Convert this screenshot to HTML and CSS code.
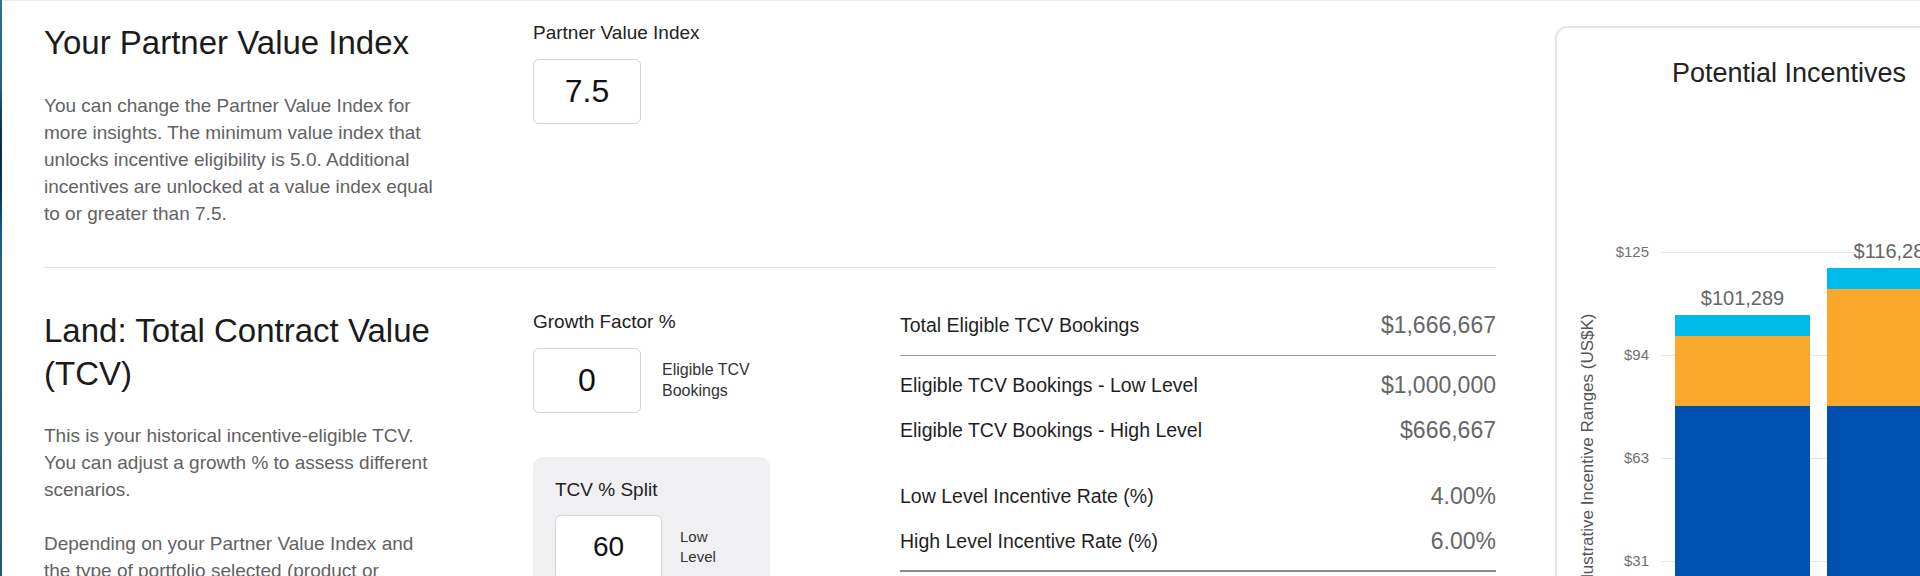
FILE: index.html
```html
<!DOCTYPE html>
<html lang="en">
<head>
<meta charset="utf-8">
<title>Partner Value Index</title>
<link rel="stylesheet" href="styles.css">
</head>
<body>
<div class="page">
  <div class="edge"></div>
  <div class="content">
    <main class="main">
      <section class="sec sec-pvi">
        <div class="intro">
          <h2 class="title">Your Partner Value Index</h2>
          <p class="desc">You can change the Partner Value Index for more insights. The minimum value index that unlocks incentive eligibility is 5.0. Additional incentives are unlocked at a value index equal to or greater than 7.5.</p>
        </div>
        <div class="controls">
          <div class="label">Partner Value Index</div>
          <div class="field">7.5</div>
        </div>
        <div></div>
      </section>

      <hr class="divider">

      <section class="sec sec-land">
        <div class="intro">
          <h2 class="title title-land">Land: Total Contract Value (TCV)</h2>
          <p class="desc">This is your historical incentive-eligible TCV. You can adjust a growth % to assess different scenarios.</p>
          <p class="desc">Depending on your Partner Value Index and the type of portfolio selected (product or services), different incentive rates apply.</p>
        </div>
        <div class="controls">
          <div class="label">Growth Factor %</div>
          <div class="field-row">
            <div class="field">0</div>
            <div class="field-note">Eligible TCV<br>Bookings</div>
          </div>
          <div class="split-box">
            <div class="label">TCV % Split</div>
            <div class="split-row">
              <div class="field field-sm">60</div>
              <div class="split-note">Low<br>Level</div>
            </div>
            <div class="split-row">
              <div class="field field-sm">40</div>
              <div class="split-note">High<br>Level</div>
            </div>
          </div>
        </div>
        <div class="summary">
          <div class="row row-total">
            <span class="row-label">Total Eligible TCV Bookings</span>
            <span class="row-value">$1,666,667</span>
          </div>
          <div class="group">
            <div class="row">
              <span class="row-label">Eligible TCV Bookings - Low Level</span>
              <span class="row-value">$1,000,000</span>
            </div>
            <div class="row">
              <span class="row-label">Eligible TCV Bookings - High Level</span>
              <span class="row-value">$666,667</span>
            </div>
          </div>
          <div class="group group-rates">
            <div class="row">
              <span class="row-label">Low Level Incentive Rate (%)</span>
              <span class="row-value">4.00%</span>
            </div>
            <div class="row">
              <span class="row-label">High Level Incentive Rate (%)</span>
              <span class="row-value">6.00%</span>
            </div>
          </div>
        </div>
      </section>
    </main>

    <aside class="card">
      <h3 class="card-title">Potential Incentives</h3>
      <div class="plot">
        <div class="axis-title">Illustrative Incentive Ranges (US$K)</div>
        <div class="grid-line" style="top:52px"><span class="tick">$125</span></div>
        <div class="grid-line" style="top:155px"><span class="tick">$94</span></div>
        <div class="grid-line" style="top:258px"><span class="tick">$63</span></div>
        <div class="grid-line" style="top:361px"><span class="tick">$31</span></div>
        <div class="bars">
          <div class="bar">
            <span class="bar-label">$101,289</span>
            <div class="seg seg-cyan" style="height:21px"></div>
            <div class="seg seg-orange" style="height:70px"></div>
            <div class="seg seg-blue" style="height:258px"></div>
          </div>
          <div class="bar">
            <span class="bar-label">$116,289</span>
            <div class="seg seg-cyan" style="height:21px"></div>
            <div class="seg seg-orange" style="height:117px"></div>
            <div class="seg seg-blue" style="height:258px"></div>
          </div>
        </div>
      </div>
    </aside>
  </div>
</div>
</body>
</html>
```
FILE: styles.css
```css
* { box-sizing: border-box; }

html, body {
  margin: 0;
  padding: 0;
  overflow: hidden;
  background: #ffffff;
}

body {
  width: 1920px;
  height: 576px;
  font-family: "Liberation Sans", Arial, sans-serif;
  color: #222222;
}

.page {
  display: flex;
  height: 576px;
}

.edge {
  width: 2px;
  flex-shrink: 0;
  background: linear-gradient(to bottom,
    #2c6fa1 0%, #245f8c 15%, #123b5c 20%, #0a2b45 26%,
    #0c3658 34%, #0e5d9a 40%, #2a6088 46%, #235a80 100%);
}

.content {
  flex: 1;
  display: flex;
  gap: 59px;
  padding-left: 42px;
  border-top: 1px solid #ececec;
  min-width: 0;
}

.main {
  width: 1452px;
  flex-shrink: 0;
}

.sec {
  display: grid;
  grid-template-columns: 489px 367px 1fr;
}

.sec-pvi {
  padding-top: 19px;
  padding-bottom: 40px;
}

.sec-land {
  padding-top: 41px;
}

.title {
  margin: 0;
  font-size: 33px;
  line-height: 46px;
  font-weight: 400;
  color: #1b1b1b;
}

.title-land {
  line-height: 43px;
  max-width: 400px;
}

.desc {
  margin: 25.5px 0 0;
  max-width: 396px;
  font-size: 19px;
  line-height: 27px;
  color: #626262;
}

.sec-land .desc {
  margin-top: 27.5px;
}

.sec-land .desc + .desc {
  margin-top: 27px;
}

.divider {
  margin: 0;
  border: 0;
  height: 1px;
  background: #e2e2e2;
}

.label {
  font-size: 19px;
  line-height: 26px;
  color: #222222;
}

.field {
  margin-top: 13px;
  width: 108px;
  height: 65px;
  display: flex;
  align-items: center;
  justify-content: center;
  background: #ffffff;
  border: 1px solid #d4d4d4;
  border-radius: 6px;
  font-size: 32px;
  color: #111111;
}

.field-row {
  display: flex;
  align-items: center;
  gap: 21px;
  margin-top: 13px;
}

.field-row .field {
  margin-top: 0;
}

.field-note {
  font-size: 16px;
  line-height: 21.5px;
  color: #333333;
}

.split-box {
  margin-top: 44px;
  width: 237px;
  padding: 20px 22px 24px;
  background: #f0f0f2;
  border-radius: 10px;
}

.split-row {
  display: flex;
  align-items: center;
  gap: 18px;
  margin-top: 12px;
}

.field-sm {
  margin-top: 0;
  width: 107px;
  font-size: 28px;
}

.split-note {
  font-size: 15px;
  line-height: 20px;
  color: #333333;
}

.summary {
  display: flex;
  flex-direction: column;
  padding-top: 2.5px;
}

.row {
  display: flex;
  justify-content: space-between;
  align-items: center;
  height: 30px;
}

.row-total {
  height: 45px;
  padding-bottom: 15px;
  border-bottom: 1px solid #999999;
}

.row-label {
  font-size: 19.5px;
  color: #1f1f1f;
}

.row-value {
  font-size: 23px;
  color: #666666;
}

.group {
  display: flex;
  flex-direction: column;
  gap: 15px;
  margin-top: 14px;
}

.group-rates {
  margin-top: 36px;
  padding-bottom: 14px;
  border-bottom: 2px solid #8a8a8a;
}

/* chart card */
.card {
  position: relative;
  width: 468px;
  height: 660px;
  flex-shrink: 0;
  margin-top: 25px;
  padding-top: 28px;
  border: 2px solid #e6e6e6;
  border-radius: 12px;
  background: #ffffff;
}

.card-title {
  margin: 0;
  text-align: center;
  font-size: 27px;
  line-height: 34px;
  font-weight: 400;
  color: #222222;
}

.plot {
  position: relative;
  margin-top: 110px;
  margin-left: 104px;
  height: 464px;
}

.axis-title {
  position: absolute;
  left: -73px;
  top: 250px;
  transform: translate(-50%, -50%) rotate(-90deg);
  white-space: nowrap;
  font-size: 17px;
  color: #555555;
}

.grid-line {
  position: absolute;
  left: 0;
  right: 0;
  height: 1px;
  background: #e6e6e6;
}

.tick {
  position: absolute;
  right: 100%;
  margin-right: 12px;
  top: -9px;
  font-size: 15px;
  line-height: 18px;
  color: #707070;
}

.bars {
  position: relative;
  z-index: 1;
  display: flex;
  align-items: flex-end;
  gap: 17px;
  height: 100%;
  padding-left: 14px;
}

.bar {
  display: flex;
  flex-direction: column;
  align-items: center;
  width: 135px;
  flex-shrink: 0;
}

.bar-label {
  margin-bottom: 5px;
  font-size: 20px;
  line-height: 24px;
  color: #666666;
  background: #ffffff;
}

.seg {
  width: 100%;
}

.seg-cyan { background: #00bceb; }
.seg-orange { background: #f9a82c; }
.seg-blue { background: #0051af; }
```
